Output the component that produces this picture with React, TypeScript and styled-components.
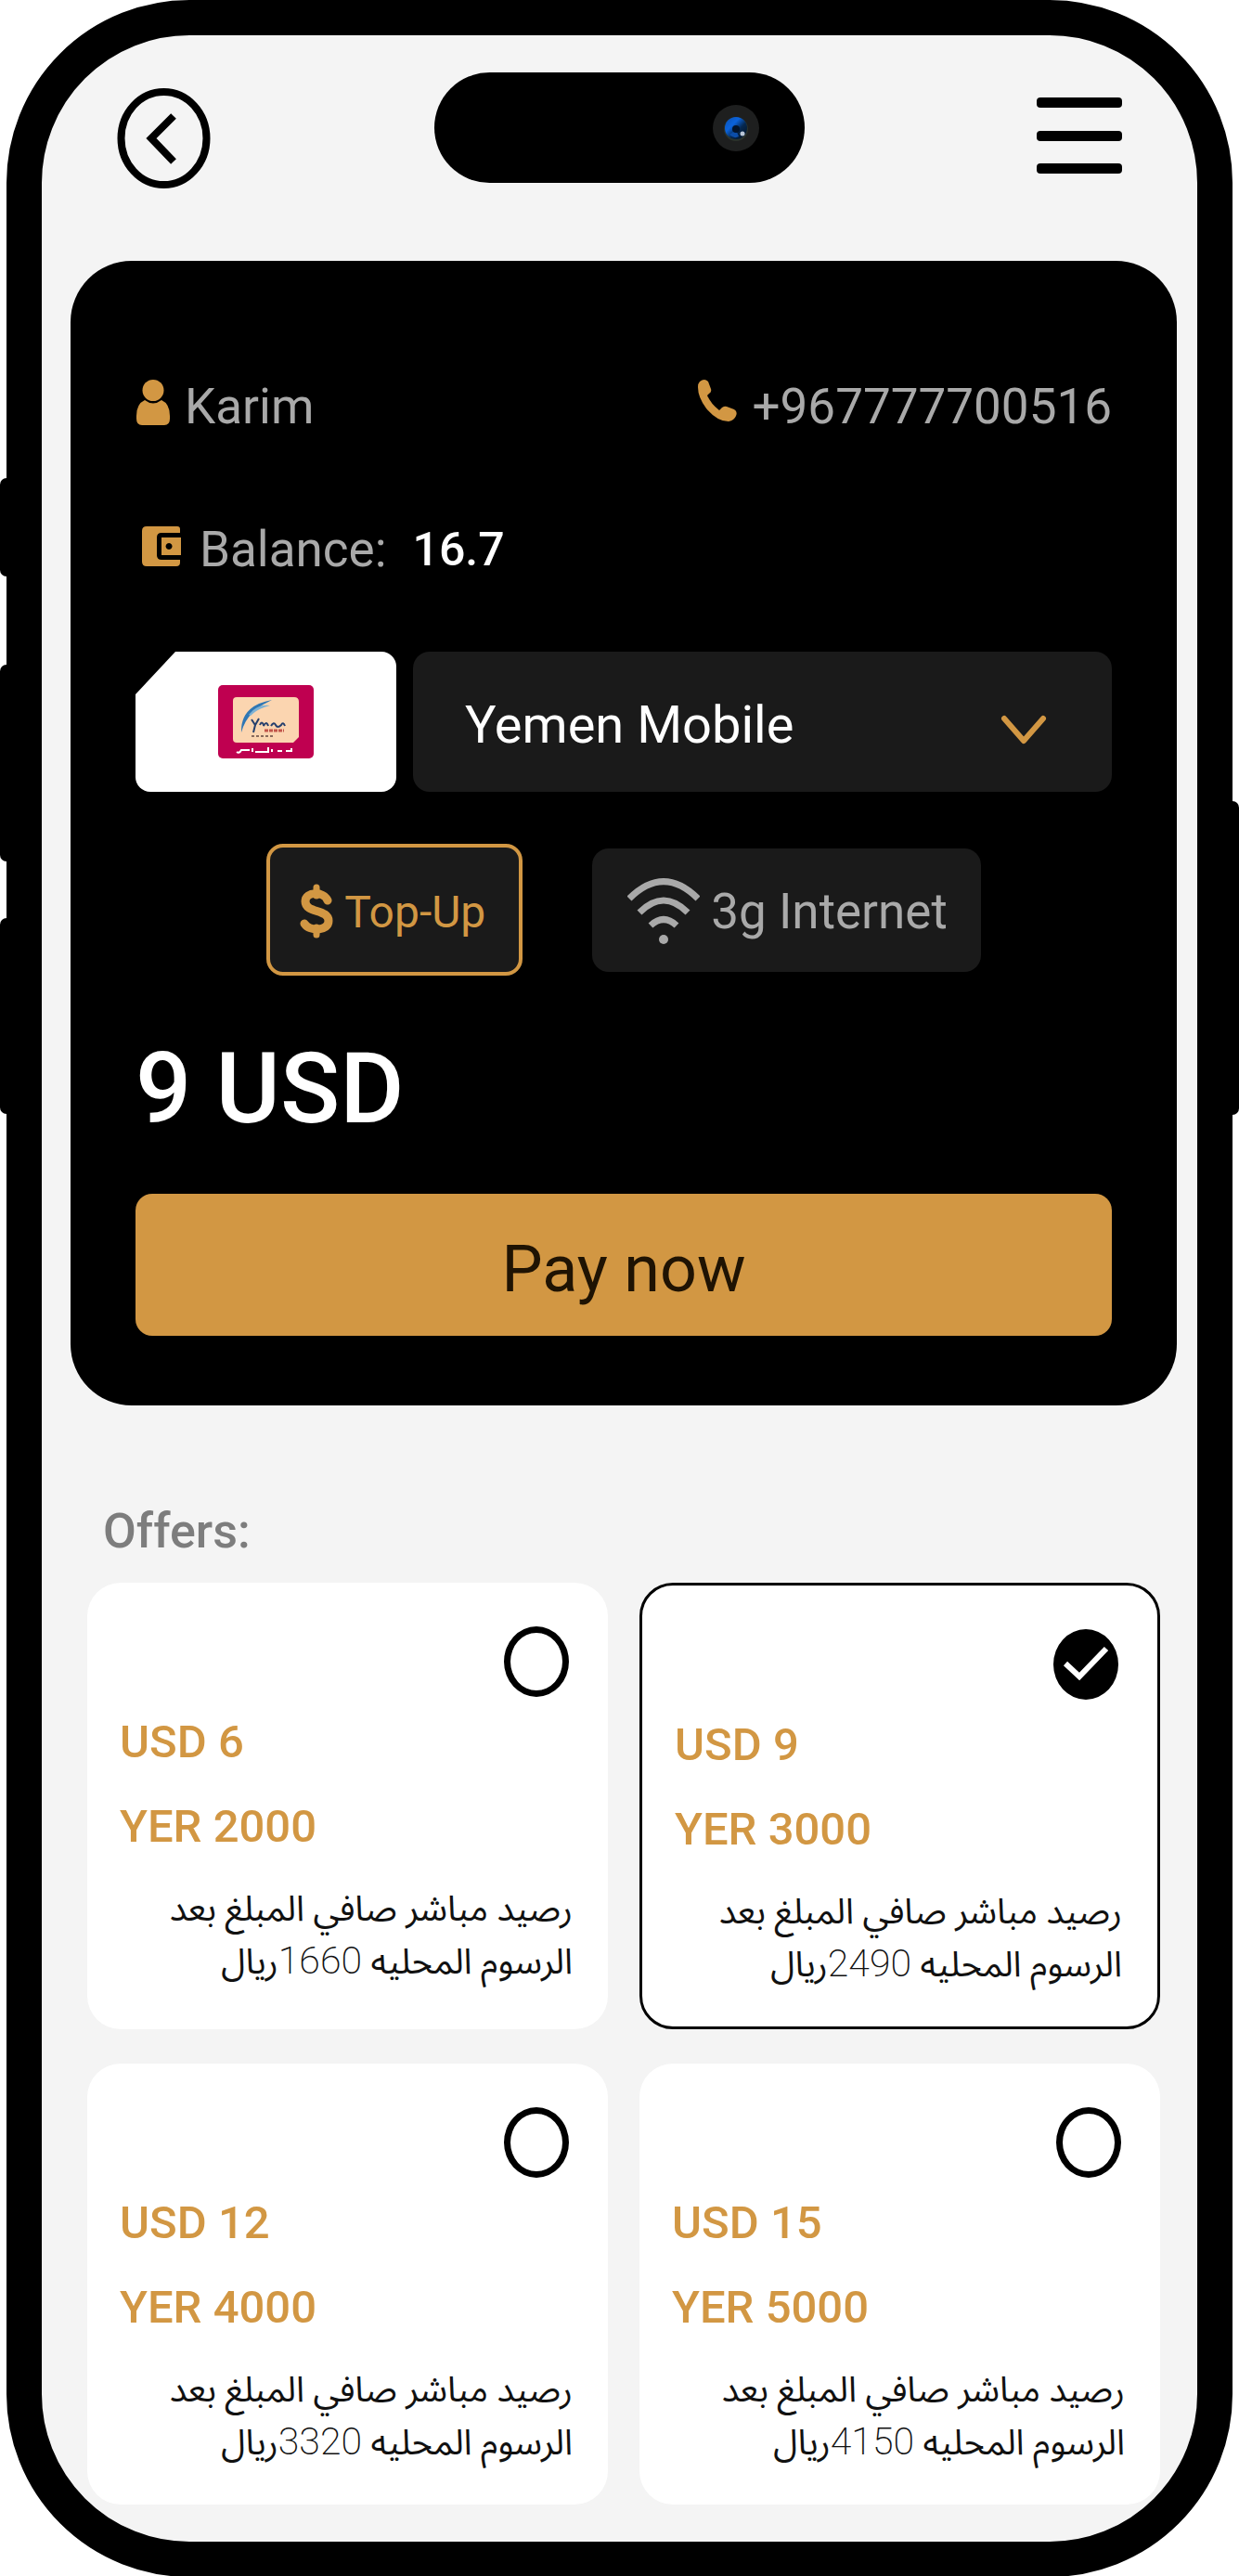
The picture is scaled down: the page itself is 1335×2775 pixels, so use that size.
import React, { useState } from "react";
import styled, { createGlobalStyle } from "styled-components";

const gold = "#d29743";
const sans = `Roboto, "Noto Sans", "DejaVu Sans", sans-serif`;
const arabic = `Roboto, "Noto Sans Arabic", "DejaVu Sans", sans-serif`;

const GlobalStyle = createGlobalStyle`
  *, *::before, *::after { box-sizing: border-box; }
  body { margin: 0; background: #fff; font-family: ${sans}; }
  button, select, input { font-family: inherit; margin: 0; }
`;

const Device = styled.main`
  position: relative;
  padding: 0 7px;
`;

const SideKey = styled.span<{ $side: "left" | "right"; $top: number; $length: number }>`
  position: absolute;
  ${(p) => p.$side}: 0;
  top: ${(p) => p.$top}px;
  width: 14px;
  height: ${(p) => p.$length}px;
  border-radius: 7px;
  background: #000;
`;

const Screen = styled.div`
  position: relative;
  border: 38px solid #000;
  border-radius: 197px;
  background: #f4f4f4;
  padding: 40px 0;
`;

const TopBar = styled.header`
  display: grid;
  grid-template-columns: 1fr auto 1fr;
  align-items: end;
  min-height: 126px;
  padding: 0 81px;
`;

const IconButton = styled.button<{ $end?: boolean }>`
  justify-self: ${(p) => (p.$end ? "end" : "start")};
  display: block;
  padding: 0;
  border: 0;
  background: none;
  cursor: pointer;
  svg { display: block; }
`;

const Island = styled.div`
  align-self: start;
  display: flex;
  align-items: center;
  justify-content: flex-end;
  width: 399px;
  height: 119px;
  padding-right: 49px;
  border-radius: 60px;
  background: #000;
`;

const Panel = styled.section`
  margin: 77px 22px 0 31px;
  padding: 125px 70px 75px;
  border-radius: 66px;
  background: #000;
  color: #a9a9a9;
`;

const Line = styled.div`
  display: flex;
  justify-content: space-between;
  font-size: 53px;
  line-height: 64px;
`;

const Fact = styled.div<{ $gap: number }>`
  display: flex;
  gap: ${(p) => p.$gap}px;
  svg { flex: none; display: block; }
`;

const Balance = styled(Line)`
  justify-content: flex-start;
  gap: 28px;
  margin-top: 90px;
  strong { color: #fff; font-size: 50px; font-weight: 500; }
`;

const Operator = styled.div`
  display: flex;
  gap: 18px;
  height: 151px;
  margin-top: 78px;
`;

const SimCard = styled.div`
  display: flex;
  flex: none;
  align-items: center;
  justify-content: center;
  width: 281px;
  border-radius: 16px;
  background: #fff;
  clip-path: polygon(43px 0, 100% 0, 100% 100%, 0 100%, 0 46px);
`;

const Picker = styled.div`
  position: relative;
  flex: 1;
  display: flex;
  svg { position: absolute; top: 66px; right: 70px; pointer-events: none; }
`;

const Select = styled.select`
  appearance: none;
  width: 100%;
  padding: 6px 56px 0;
  border: 0;
  border-radius: 18px;
  background: #1a1a1a;
  color: #fff;
  font-size: 56px;
`;

const Services = styled.div`
  display: flex;
  align-items: center;
  justify-content: center;
  gap: 75px;
  margin-top: 56px;
`;

const Service = styled.button<{ $active?: boolean }>`
  display: flex;
  align-items: center;
  gap: 12px;
  height: ${(p) => (p.$active ? 142 : 133)}px;
  padding: 4px 36px 0 ${(p) => (p.$active ? 32 : 38)}px;
  border: ${(p) => (p.$active ? `4px solid ${gold}` : "0")};
  border-radius: 18px;
  background: #1a1a1a;
  color: ${(p) => (p.$active ? gold : "#a9a9a9")};
  font-size: ${(p) => (p.$active ? 48 : 53)}px;
  cursor: pointer;
`;

const Amount = styled.p`
  margin: 60px 0 51px;
  color: #fff;
  font-size: 106px;
  font-weight: 500;
  line-height: 124px;
`;

const PayButton = styled.button`
  display: block;
  width: 100%;
  height: 153px;
  padding: 8px 0 0;
  border: 0;
  border-radius: 18px;
  background: ${gold};
  color: #1f1303;
  font-size: 70px;
  cursor: pointer;
`;

const OffersTitle = styled.h2`
  margin: 104px 66px 23px;
  color: #7d7d7d;
  font-size: 52px;
  font-weight: 500;
  line-height: 64px;
`;

const Offers = styled.div`
  display: grid;
  grid-template-columns: 1fr 1fr;
  gap: 37px 34px;
  padding: 0 40px 0 49px;
`;

const OfferCard = styled.label<{ $selected: boolean }>`
  display: flex;
  flex-direction: column;
  padding: 47px 38px 40px 35px;
  border: ${(p) => (p.$selected ? "3px solid #000" : "0")};
  border-radius: 36px;
  background: #fff;
  cursor: pointer;
`;

const Choice = styled.span`
  display: grid;
  align-self: flex-end;
  margin-right: 4px;
  svg { grid-area: 1 / 1; pointer-events: none; }
`;

const Radio = styled.input`
  grid-area: 1 / 1;
  appearance: none;
  width: 70px;
  height: 76px;
  border: 7px solid #000;
  border-radius: 50%;
  &:checked { background: #000; }
`;

const Price = styled.span<{ $space: number }>`
  margin-top: ${(p) => p.$space}px;
  color: ${gold};
  font-size: 49px;
  font-weight: 500;
  line-height: 64px;
`;

const Note = styled.span`
  margin-top: 28px;
  color: #111;
  font-family: ${arabic};
  font-size: 38px;
  font-weight: 400;
  line-height: 56px;
`;

const NoteLine = styled.span`
  display: block;
  height: 56px;
`;

const Net = styled.span`
  font-size: 41px;
  font-weight: 200;
`;

const BackIcon = () => (
  <svg width="101" height="110" viewBox="0 0 101 110" fill="none" stroke="#000">
    <ellipse cx="50.5" cy="55" rx="46" ry="50" strokeWidth="8" />
    <path d="M61 31 37 55l24 25" strokeWidth="8" />
  </svg>
);

const MenuIcon = () => (
  <svg width="92" height="110" viewBox="0 0 92 110" fill="#000">
    <rect y="11" width="92" height="11" rx="4" />
    <rect y="47" width="92" height="11" rx="4" />
    <rect y="82" width="92" height="11" rx="4" />
  </svg>
);

const Camera = () => (
  <svg width="50" height="50" viewBox="0 0 50 50">
    <defs>
      <linearGradient id="lens" x1="0" y1="0" x2="1" y2="1">
        <stop offset="0" stopColor="#0a4fb0" />
        <stop offset="0.350" stopColor="#0b63dc" />
        <stop offset="0.600" stopColor="#06284f" />
        <stop offset="1" stopColor="#03101f" />
      </linearGradient>
    </defs>
    <circle cx="25" cy="25" r="25" fill="#1e1f1f" />
    <circle cx="25" cy="26" r="13" fill="#2b332c" />
    <circle cx="25" cy="25" r="12" fill="url(#lens)" />
    <path d="M18 32q5 5 10 2l-3-7Z" fill="#0b4da8" />
    <circle cx="25" cy="26" r="4" fill="#03142b" />
    <circle cx="32" cy="31" r="2.5" fill="#b9c6d6" />
  </svg>
);

const UserIcon = () => (
  <svg width="38" height="64" viewBox="0 0 38 64" fill={gold}>
    <circle cx="19" cy="14.5" r="11.5" />
    <path d="M10 25q9 7 18 0 9 4 9 17v3q0 7-6 7H7q-6 0-6-7v-3q0-13 9-17Z" />
  </svg>
);

const PhoneIcon = () => (
  <svg width="44" height="64" viewBox="0 0 44 64" fill={gold}>
    <path d="M3 5Q8 1 12 5L15 13Q16 16 13 18L11 20Q15 29 24 36L27 33Q30 31 32 32L40 35Q44 37 42 42Q40 47 34 48Q22 48 10 34Q1 22 1 11Q1 7 3 5Z" />
  </svg>
);

const WalletIcon = () => (
  <svg width="50" height="64" viewBox="0 0 50 64" fill={gold}>
    <path d="M12 7h33q3 0 3 3v4H28q-5 0-5 5v19q0 5 5 5h20v3q0 4-4 4H12q-5 0-5-5V12q0-5 5-5Z" />
    <path fillRule="evenodd" d="M28 19h21v19H28ZM36 25a3.500 3.500 0 1 0 0.100 0Z" />
  </svg>
);

const ChevronIcon = () => (
  <svg width="50" height="36" viewBox="0 0 50 36" fill="none" stroke={gold} strokeWidth="6" strokeLinecap="round" strokeLinejoin="round">
    <path d="M4 6 25 30 46 6" />
  </svg>
);

const DollarIcon = () => (
  <svg width="36" height="60" viewBox="0 0 36 60" fill="none" stroke={gold} strokeLinecap="round">
    <path d="M30 18C26 8 6 8 6 19c0 13 25 8 25 21 0 11-20 12-26 3" strokeWidth="9" />
    <path d="M18 4v9M18 47v8" strokeWidth="7" />
  </svg>
);

const WifiIcon = () => (
  <svg width="78" height="72" viewBox="0 0 78 72" fill="none" stroke="#a9a9a9" strokeWidth="7">
    <path d="M2 22Q39-15 76 22M13 37q26-26 52 0M25 51q14-13 28 0" />
    <circle cx="39" cy="66" r="5" fill="#a9a9a9" stroke="none" />
  </svg>
);

const CheckIcon = () => (
  <svg width="70" height="76" viewBox="0 0 70 76" fill="none" stroke="#fff" strokeWidth="6">
    <path d="M13 37 28 51 57 21" />
  </svg>
);

const OperatorLogo = () => (
  <svg width="103" height="79" viewBox="0 0 103 79" role="img" aria-label="Yemen Mobile">
    <rect width="103" height="79" rx="5" fill="#bf0050" />
    <path d="M20 13h62q5 0 5 5v38l-6 6H20q-4 0-4-4V17q0-4 4-4Z" fill="#fbd5b0" />
    <path d="M25 51Q24 22 58 16 34 27 27 45Z" fill="#2f77b4" />
    <path d="M33 32Q42 20 56 22 43 25 35 33Z" fill="#7fb2d3" />
    <path d="M36 37l4 6 4-7M40 43l-2 8M45 43q2-5 4 0v1q3-6 5 0m3 0q3-5 5-1t6 0q2-4 4 1" fill="none" stroke="#26406d" strokeWidth="2" />
    <path d="M50 49h21" stroke="#c2554a" strokeWidth="3" strokeDasharray="4 1" />
    <path d="M36 55h24" stroke="#8a6a5c" strokeWidth="2" strokeDasharray="3 2" />
    <path d="M20 72q3 2 5-2h9m3 2v-4m3 4h14v-5m4 5v-3m6 2h5m4 0h6v-3" fill="none" stroke="#fff" strokeWidth="2" />
  </svg>
);

const offers = [
  { usd: 6, yer: 2000, net: 1660 },
  { usd: 9, yer: 3000, net: 2490 },
  { usd: 12, yer: 4000, net: 3320 },
  { usd: 15, yer: 5000, net: 4150 },
];

export default function App() {
  const [selected, setSelected] = useState(9);

  return (
    <>
      <GlobalStyle />
      <Device>
        <SideKey $side="left" $top={515} $length={106} />
        <SideKey $side="left" $top={716} $length={212} />
        <SideKey $side="left" $top={989} $length={211} />
        <SideKey $side="right" $top={863} $length={338} />
        <Screen>
          <TopBar>
            <IconButton type="button" aria-label="Back"><BackIcon /></IconButton>
            <Island><Camera /></Island>
            <IconButton type="button" aria-label="Menu" $end><MenuIcon /></IconButton>
          </TopBar>

          <Panel>
            <Line>
              <Fact $gap={15}><UserIcon /><span>Karim</span></Fact>
              <Fact $gap={15}><PhoneIcon /><span>+967777700516</span></Fact>
            </Line>
            <Balance>
              <Fact $gap={19}><WalletIcon /><span>Balance:</span></Fact>
              <strong>16.7</strong>
            </Balance>
            <Operator>
              <SimCard><OperatorLogo /></SimCard>
              <Picker>
                <Select aria-label="Operator" defaultValue="Yemen Mobile">
                  <option>Yemen Mobile</option>
                </Select>
                <ChevronIcon />
              </Picker>
            </Operator>
            <Services>
              <Service type="button" $active><DollarIcon />Top-Up</Service>
              <Service type="button"><WifiIcon />3g Internet</Service>
            </Services>
            <Amount>{selected} USD</Amount>
            <PayButton type="button">Pay now</PayButton>
          </Panel>

          <OffersTitle>Offers:</OffersTitle>
          <Offers role="radiogroup" aria-label="Offers">
            {offers.map((o) => (
              <OfferCard key={o.usd} $selected={selected === o.usd}>
                <Choice>
                  <Radio type="radio" name="offer" checked={selected === o.usd} onChange={() => setSelected(o.usd)} />
                  {selected === o.usd && <CheckIcon />}
                </Choice>
                <Price $space={17}>USD {o.usd}</Price>
                <Price $space={27}>YER {o.yer}</Price>
                <Note dir="rtl" lang="ar">
                  <NoteLine>رصيد مباشر صافي المبلغ بعد</NoteLine>
                  <NoteLine>
                    الرسوم المحليه <Net>{o.net}</Net>ريال
                  </NoteLine>
                </Note>
              </OfferCard>
            ))}
          </Offers>
        </Screen>
      </Device>
    </>
  );
}
